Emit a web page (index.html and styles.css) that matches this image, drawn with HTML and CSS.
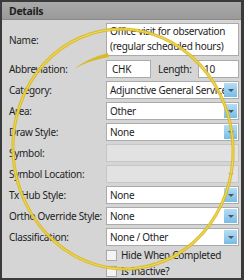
FILE: index.html
```html
<!DOCTYPE html>
<html lang="en">
<head>
    <meta charset="UTF-8">
    <title>Details</title>
    <link rel="stylesheet" href="styles.css">
</head>
<body>
    <div class="panel">
        <div class="panel-header">Details</div>

        <div class="form">
            <label>Name:</label>
            <div class="box multiline">Office visit for observation<br>(regular scheduled hours)</div>

            <label>Abbreviation:</label>
            <div class="abbr-row">
                <div class="box short">CHK</div>
                <span class="inline-label">Length:</span>
                <div class="box length">10</div>
            </div>

            <label>Category:</label>
            <div class="box select">Adjunctive General Service<span class="drop"></span></div>

            <label>Area:</label>
            <div class="box select">Other<span class="drop"></span></div>

            <label>Draw Style:</label>
            <div class="box select">None<span class="drop"></span></div>

            <label>Symbol:</label>
            <div class="box disabled"></div>

            <label>Symbol Location:</label>
            <div class="box disabled select"><span class="drop faint"></span></div>

            <label>Tx Hub Style:</label>
            <div class="box select">None<span class="drop"></span></div>

            <label>Ortho Override Style:</label>
            <div class="box select">None<span class="drop"></span></div>

            <label>Classification:</label>
            <div class="box select">None / Other<span class="drop"></span></div>
        </div>

        <div class="checks">
            <div class="check"><span class="checkbox"></span>Hide When Completed</div>
            <div class="check"><span class="checkbox"></span>Is Inactive?</div>
        </div>

        <!-- hand drawn highlight over the form -->
        <svg class="highlight" width="244" height="280" viewBox="0 0 244 280">
            <ellipse cx="123" cy="149" rx="110" ry="120" transform="rotate(-6 123 149)" fill="none" stroke="#d9b91e" stroke-width="3.2" opacity="0.9"/>
            <ellipse cx="123" cy="149" rx="110" ry="120" transform="rotate(-6 123 149)" fill="none" stroke="#f4e06a" stroke-width="1" opacity="0.8"/>
            <path d="M74 69 Q 88 58 108 53 L 109 57 Q 90 60 74 69 Z" fill="#d9b91e" opacity="0.95"/>
        </svg>
    </div>
</body>
</html>
```

FILE: styles.css
```css
* {
    margin: 0;
    padding: 0;
    box-sizing: border-box;
}

body {
    font-family: 'Noto Sans', 'Open Sans', sans-serif;
    font-size: 10px;
    letter-spacing: -0.3px;
    color: #1e1e1e;
}

.panel {
    position: relative;
    width: 244px;
    height: 280px;
    background-color: #d5d5d5;
    border: 2px solid #3a3a3a;
    border-right-width: 3px;
}

.panel-header {
    height: 18px;
    line-height: 18px;
    padding-left: 7px;
    font-weight: bold;
    font-size: 10.5px;
    background: linear-gradient(#a9a9a9, #9a9a9a);
    border-bottom: 1px solid #8a8a8a;
}

.form {
    display: grid;
    grid-template-columns: 97px 133px;
    row-gap: 3px;
    align-items: center;
    padding: 3px 0 0 7px;
}

.form label {
    white-space: nowrap;
}

.box {
    position: relative;
    height: 18px;
    line-height: 16px;
    padding-left: 3px;
    background-color: #fff;
    border: 1px solid #ababab;
    white-space: nowrap;
    overflow: hidden;
}

.box.multiline {
    height: 33px;
    line-height: 15px;
    margin-bottom: 1px;
}

.abbr-row {
    display: flex;
    align-items: center;
}

.box.short {
    width: 45px;
    padding-left: 5px;
}

.inline-label {
    margin-left: 7px;
    width: 40px;
}

.box.length {
    width: 41px;
    padding-left: 5px;
}

.box.disabled {
    background-color: #e2e2e2;
    border-color: #c6c6c6;
}

.drop {
    position: absolute;
    top: 1px;
    right: 1px;
    width: 13px;
    height: 14px;
    background: linear-gradient(#b4ddf5, #78bce6);
}

.drop::after {
    content: '';
    position: absolute;
    left: 4px;
    top: 6px;
    border-left: 3px solid transparent;
    border-right: 3px solid transparent;
    border-top: 3px solid #4a5560;
}

.drop.faint {
    background: none;
}

.drop.faint::after {
    border-top-color: #b0b0b0;
}

.checks {
    display: flex;
    flex-direction: column;
    gap: 4px;
    padding: 3px 0 0 104px;
}

.check {
    display: flex;
    align-items: center;
    gap: 4px;
    height: 12px;
}

.checkbox {
    width: 11px;
    height: 11px;
    background-color: #f4f4f4;
    border: 1px solid #a9a9a9;
}

.highlight {
    position: absolute;
    top: -2px;
    left: -2px;
    pointer-events: none;
}
```
